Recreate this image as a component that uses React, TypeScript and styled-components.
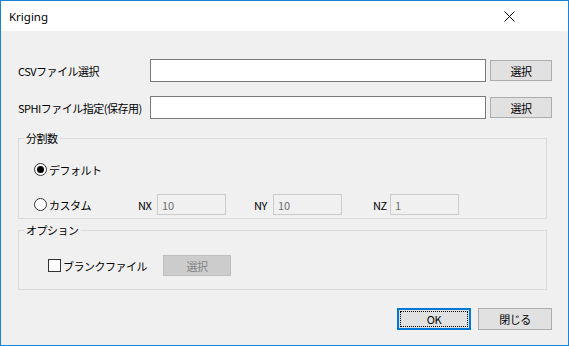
import React from 'react';
import styled, {createGlobalStyle} from 'styled-components';

const GlobalStyle = createGlobalStyle`
  html, body {
    margin: 0;
    padding: 0;
    background: #ffffff;
  }
  * {
    box-sizing: border-box;
  }
`

const Window = styled.div`
  width: 569px;
  height: 346px;
  border: 1px solid #1883d7;
  display: flex;
  flex-direction: column;
  font-family: "Noto Sans CJK JP", "Noto Sans", sans-serif;
  font-size: 11px;
  letter-spacing: -0.5px;
  color: #000;
`

const TitleBar = styled.div`
  height: 30px;
  background: #fff;
  display: flex;
  align-items: center;
  justify-content: space-between;
  padding: 0 53px 0 8px;
`

const Title = styled.span`
  font-family: "Noto Sans", "Open Sans", sans-serif;
  font-size: 11.5px;
  letter-spacing: 0;
  color: #000;
`

const CloseButton = styled.div`
  width: 11px;
  height: 11px;
  display: flex;
  svg {
    display: block;
  }
`

const Body = styled.div`
  flex: 1;
  background: #f0f0f0;
  padding: 28px 16px 0 16px;
  display: flex;
  flex-direction: column;
`

const FileRow = styled.div<{$top?: number}>`
  display: flex;
  align-items: center;
  height: 23px;
  margin-top: ${(p) => p.$top || 0}px;
`

const RowLabel = styled.span`
  width: 133px;
  padding-left: 1px;
  white-space: nowrap;
`

const PathInput = styled.input`
  flex: 1;
  height: 23px;
  border: 1px solid #7a7a7a;
  background: #fff;
  outline: none;
  padding: 0 4px;
  font: inherit;
`

const Button = styled.button<{$width: number, $height?: number}>`
  width: ${(p) => p.$width}px;
  height: ${(p) => p.$height || 21}px;
  background: #e1e1e1;
  border: 1px solid #adadad;
  font: inherit;
  letter-spacing: inherit;
  color: #000;
  padding: 0;
  display: flex;
  align-items: center;
  justify-content: center;
  &:disabled {
    background: #cccccc;
    border-color: #bfbfbf;
    color: #838383;
  }
`

const SideButton = styled(Button)`
  margin-left: 4px;
`

const DefaultButton = styled(Button)`
  border: 2px solid #0078d7;
  position: relative;
  &::after {
    content: '';
    position: absolute;
    inset: 1px;
    border: 1px dotted #000;
  }
`

const Group = styled.div<{$top: number, $height: number, $padTop: number, $padLeft: number}>`
  position: relative;
  margin: ${(p) => p.$top}px 5px 0 1px;
  height: ${(p) => p.$height}px;
  border: 1px solid #dcdcdc;
  padding: ${(p) => p.$padTop}px 0 0 ${(p) => p.$padLeft}px;
  display: flex;
  flex-direction: column;
`

const Legend = styled.span`
  position: absolute;
  top: -9px;
  left: 5px;
  padding: 0 2px;
  background: #f0f0f0;
  line-height: 16px;
`

const OptionRow = styled.div<{$top?: number}>`
  display: flex;
  align-items: center;
  height: 21px;
  margin-top: ${(p) => p.$top || 0}px;
`

const Choice = styled.label<{$width?: number}>`
  display: flex;
  align-items: center;
  width: ${(p) => (p.$width ? p.$width + 'px' : 'auto')};
  white-space: nowrap;
`

const RadioMark = styled.span<{$checked?: boolean}>`
  width: 13px;
  height: 13px;
  border-radius: 50%;
  border: 1px solid #333;
  background: #fff;
  margin-right: 2px;
  display: flex;
  align-items: center;
  justify-content: center;
  &::after {
    content: '';
    width: 7px;
    height: 7px;
    border-radius: 50%;
    background: ${(p) => (p.$checked ? '#000' : 'transparent')};
  }
`

const CheckMark = styled.span`
  width: 13px;
  height: 13px;
  border: 1px solid #333;
  background: #fff;
  margin-right: 2px;
`

const FieldLabel = styled.span<{$width: number}>`
  width: ${(p) => p.$width}px;
  white-space: nowrap;
`

const NumberInput = styled.input<{$gap?: number}>`
  width: 69px;
  height: 21px;
  border: 1px solid #cccccc;
  background: #f0f0f0;
  color: #6d6d6d;
  font: inherit;
  padding: 0 4px;
  outline: none;
  margin-right: ${(p) => p.$gap || 0}px;
`

const Footer = styled.div`
  display: flex;
  justify-content: flex-end;
  gap: 7px;
  margin-top: 18px;
`

const fields = [
  {name: 'NX', value: '10', width: 19, gap: 28},
  {name: 'NY', value: '10', width: 19, gap: 31},
  {name: 'NZ', value: '1', width: 17, gap: 0},
]

export default function App() {
  return <>
    <GlobalStyle />
    <Window>
      <TitleBar>
        <Title>Kriging</Title>
        <CloseButton>
          <svg width="11" height="11" viewBox="0 0 11 11">
            <path d="M0.5 0.5 L10.5 10.5 M10.5 0.5 L0.5 10.5" stroke="#000" strokeWidth="1" />
          </svg>
        </CloseButton>
      </TitleBar>
      <Body>
        <FileRow>
          <RowLabel>CSVファイル選択</RowLabel>
          <PathInput />
          <SideButton $width={62}>選択</SideButton>
        </FileRow>
        <FileRow $top={14}>
          <RowLabel>SPHIファイル指定(保存用)</RowLabel>
          <PathInput />
          <SideButton $width={62}>選択</SideButton>
        </FileRow>

        <Group $top={19} $height={81} $padTop={20} $padLeft={15}>
          <Legend>分割数</Legend>
          <OptionRow>
            <Choice><RadioMark $checked />デフォルト</Choice>
          </OptionRow>
          <OptionRow $top={14}>
            <Choice $width={104}><RadioMark />カスタム</Choice>
            {fields.map((f) => <React.Fragment key={f.name}>
              <FieldLabel $width={f.width}>{f.name}</FieldLabel>
              <NumberInput $gap={f.gap} value={f.value} disabled readOnly />
            </React.Fragment>)}
          </OptionRow>
        </Group>

        <Group $top={11} $height={60} $padTop={24} $padLeft={29}>
          <Legend>オプション</Legend>
          <OptionRow>
            <Choice $width={115}><CheckMark />ブランクファイル</Choice>
            <Button $width={68} disabled>選択</Button>
          </OptionRow>
        </Group>

        <Footer>
          <DefaultButton $width={74} $height={22}>OK</DefaultButton>
          <Button $width={74} $height={22}>閉じる</Button>
        </Footer>
      </Body>
    </Window>
  </>
}
